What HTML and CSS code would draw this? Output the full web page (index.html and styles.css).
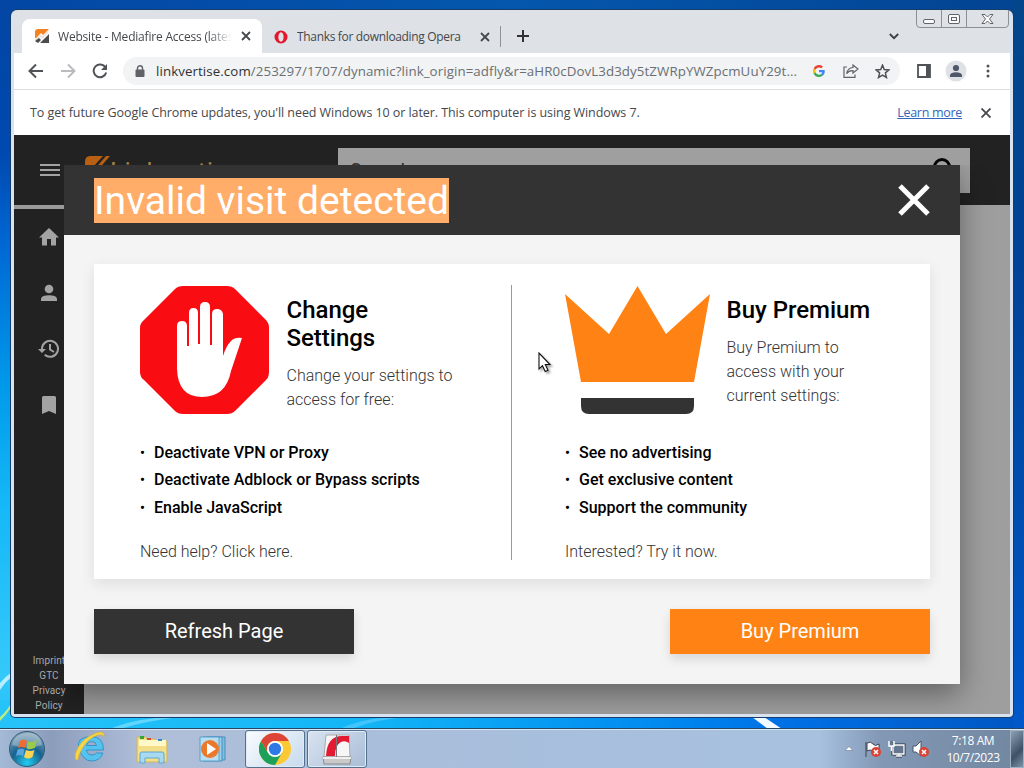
FILE: index.html
```html
<!DOCTYPE html>
<html lang="en">
<head>
  <meta charset="UTF-8">
  <title>Website - Mediafire Access</title>
  <link rel="stylesheet" href="styles.css">
</head>
<body>
<div class="desktop">
  <svg class="wallpaper" width="1024" height="768" viewBox="0 0 1024 768">
    <path d="M0 683Q6 676 12 672V677Q5 682 0 690Z" fill="#d9f7ff" opacity=".8"/>
    <path d="M0 717Q7 711 12 702V706Q7 714 0 721Z" fill="#b8ee81"/>
    <path d="M110 729Q130 720 165 717H180Q145 721 120 729Z" fill="#8ee6ff" opacity=".6"/>
    <path d="M340 729Q360 719 390 717H405Q370 721 352 729Z" fill="#6fd4ff" opacity=".5"/>
    <path d="M752 717H764L782 729H768Z" fill="#f2fbff"/>
  </svg>

  <div class="window">
    <div class="tabstrip">
      <div class="tab active">
        <svg width="16" height="16" viewBox="0 0 16 16"><path d="M4 1H15L9 7L7 5L3 10H1V4Q1 1 4 1Z" fill="#f58220"/><path d="M1 11L6 6L8 8L14 3V5L8 11L6 9L2 13Z" fill="#e9e5df"/><path d="M15 6V15H6L9 12ZM1 13L5 10L7 12L4 15Z" fill="#4b4b4e"/></svg>
        <span class="tab-title">Website - Mediafire Access (lates</span>
        <svg class="x" width="10" height="10" viewBox="0 0 10 10"><path d="M1 1L9 9M9 1L1 9"/></svg>
      </div>
      <div class="tab">
        <svg width="14" height="14" viewBox="0 0 14 14"><path fill-rule="evenodd" d="M7 .5A6.5 6.5 0 1 1 7 13.5A6.5 6.5 0 1 1 7 .5ZM7 2.3C3.5 2.3 3.5 11.7 7 11.7S10.500 2.300 7 2.300Z" fill="#e3182d"/></svg>
        <span class="tab-title">Thanks for downloading Opera</span>
        <svg class="x" width="10" height="10" viewBox="0 0 10 10"><path d="M1 1L9 9M9 1L1 9"/></svg>
      </div>
      <svg class="newtab" width="12" height="12" viewBox="0 0 12 12"><path d="M6 0V12M0 6H12" stroke="#303236" stroke-width="2"/></svg>
      <svg class="tabsearch" width="10" height="7" viewBox="0 0 10 7"><path d="M.8 1L5 5.200L9.200 1" fill="none" stroke="#3c4043" stroke-width="1.800"/></svg>
      <svg class="caption" width="94" height="18" viewBox="0 0 94 18" fill="none">
        <path d="M.5 0V14Q.5 17.500 4 17.500H89Q92.500 17.500 92.500 14V0M25.500 0V17M50.500 0V17" stroke="#8b8f96"/>
        <g stroke="#5f646d"><rect x="7.500" y="9.500" width="11" height="4" rx="1.500" fill="#fafafa"/><rect x="32.500" y="4.500" width="11" height="9" rx="1.500" fill="#fafafa"/><rect x="35.500" y="7.500" width="5" height="3"/><path d="M66 4.500H69L71.500 7L74 4.500H77L73.500 9L77 13.500H74L71.500 11L69 13.500H66L69.500 9Z" fill="#fafafa"/></g>
      </svg>
    </div>

    <div class="toolbar">
      <svg class="nav" width="16" height="16" viewBox="0 0 16 16"><path d="M15 8H2M8 1.500L1.500 8L8 14.500" stroke="#4f5357"/></svg>
      <svg class="nav" width="16" height="16" viewBox="0 0 16 16"><path d="M1 8H14M8 1.500L14.500 8L8 14.500" stroke="#b9bbbe"/></svg>
      <svg class="nav" width="16" height="16" viewBox="0 0 16 16"><path d="M13.500 4.500A6.400 6.400 0 1 0 14.200 9.600" stroke="#4f5357"/><path d="M15 1V7H9Z" fill="#4f5357"/></svg>
      <div class="omnibox">
        <svg width="10" height="13" viewBox="0 0 10 13"><rect x=".5" y="4.500" width="9" height="7.500" rx="1" fill="#5f6368"/><path d="M2.500 5V3.300a2.500 2.500 0 0 1 5 0V5" fill="none" stroke="#5f6368" stroke-width="1.400"/></svg>
        <span class="url"><b>linkvertise.com</b>/253297/1707/dynamic?link_origin=adfly&amp;r=aHR0cDovL3d3dy5tZWRpYWZpcmUuY29t...</span>
        <svg class="g" width="12" height="12" viewBox="0 0 48 48"><path fill="#ea4335" d="M24 9.500c3.500 0 6.700 1.200 9.200 3.600l6.900-6.900C35.900 2.400 30.500 0 24 0 14.600 0 6.500 5.400 2.600 13.200l8 6.200C12.400 13.700 17.700 9.500 24 9.500z"/><path fill="#4285f4" d="M47 24.600c0-1.600-.2-3.100-.4-4.600H24v9h12.900c-.6 3-2.300 5.500-4.800 7.200l7.700 6C44.400 38 47 31.800 47 24.600z"/><path fill="#fbbc05" d="M10.500 28.600a14.500 14.500 0 0 1 0-9.200l-8-6.200a24 24 0 0 0 0 21.600z"/><path fill="#34a853" d="M24 48c6.500 0 11.900-2.100 15.900-5.800l-7.700-6c-2.200 1.500-4.900 2.300-8.200 2.300-6.300 0-11.600-4.200-13.500-9.900l-8 6.200C6.500 42.600 14.600 48 24 48z"/></svg>
        <svg class="share" width="16" height="14" viewBox="0 0 16 14" fill="none" stroke="#5f6368" stroke-width="1.200"><path d="M4 3H1V13.400H12V10.500M10 1L15 5L10 9V6.600Q6 6.300 3.600 9.600Q4.500 4 10 3.500Z"/></svg>
        <svg width="15" height="15" viewBox="0 0 14 14"><path d="M7 1L8.600 5.100L13 5.500L9.700 8.300L10.700 12.600L7 10.300L3.300 12.600L4.300 8.300L1 5.500L5.400 5.100Z" fill="none" stroke="#4f5357" stroke-width="1.400"/></svg>
      </div>
      <svg class="panel" width="14" height="14" viewBox="0 0 14 14"><path d="M1 1H13V13H1Z" fill="none" stroke="#4f5357" stroke-width="1.800"/><path d="M9 1H13V13H9Z" fill="#4f5357"/></svg>
      <svg class="avatar" width="22" height="22" viewBox="0 0 22 22"><circle cx="11" cy="11" r="10.500" fill="#dee1e6"/><circle cx="11" cy="8" r="3.100" fill="#4f5868"/><path d="M5 17V15Q6 12.200 11 12.200T17 15V17Z" fill="#4f5868"/></svg>
      <svg width="4" height="14" viewBox="0 0 4 14" fill="#4f5357"><circle cx="2" cy="2" r="1.500"/><circle cx="2" cy="7" r="1.500"/><circle cx="2" cy="12" r="1.500"/></svg>
    </div>

    <div class="infobar">
      <span class="info">To get future Google Chrome updates, you'll need Windows 10 or later. This computer is using Windows 7.</span>
      <a class="learn">Learn more</a>
      <svg class="x" width="10" height="10" viewBox="0 0 10 10"><path d="M.5 .5L9.500 9.500M9.500 .5L.5 9.500"/></svg>
    </div>

    <div class="page">
      <div class="site-header">
        <svg width="20" height="14" viewBox="0 0 20 14"><path d="M0 2H20M0 7H20M0 12H20" stroke="#a3a3a3" stroke-width="2"/></svg>
        <svg class="logo" width="26" height="28" viewBox="0 0 26 28"><path d="M5 0H18L8 11H0V6Q0 0 5 0ZM21 0H25L12 15H8Z" fill="#b85f13"/></svg>
        <span class="brand">Linkvertise</span>
        <div class="search"><span>Search...</span><svg width="24" height="24" viewBox="0 0 24 24"><circle cx="9" cy="9" r="7.500" fill="none" stroke="#050505" stroke-width="3"/><path d="M14 14L22 22" stroke="#050505" stroke-width="3"/></svg></div>
      </div>
      <div class="sidebar">
        <svg width="20" height="18" viewBox="0 0 20 18"><path d="M10 0L20 9.500H17V17.500H12V11H8V17.500H3V9.500H0Z"/></svg>
        <svg width="18" height="18" viewBox="0 0 18 18"><circle cx="9" cy="5" r="4.300"/><path d="M1 17V14.500Q2 11.200 9 11.200T17 14.500V17Z"/></svg>
        <svg class="history" width="22" height="20" viewBox="0 0 22 20"><path d="M4 10A8 8 0 1 1 6.700 15.800M12 5V10.500L16 13" fill="none" stroke="#a3a3a3" stroke-width="2"/><path d="M0 10H8L4 14Z"/></svg>
        <svg width="14" height="18" viewBox="0 0 14 18"><path d="M0 1.500Q0 0 1.500 0H12.500Q14 0 14 1.500V18L7 15L0 18Z"/></svg>
        <div class="legal">Imprint<br>GTC<br>Privacy<br>Policy</div>
      </div>
    </div>
  </div>

  <div class="modal">
    <div class="modal-header">
      <h1>Invalid visit detected</h1>
      <svg width="32" height="32" viewBox="0 0 32 32"><path d="M2 2L30 30M30 2L2 30" stroke="#fff" stroke-width="5"/></svg>
    </div>
    <div class="card">
      <div class="option">
        <div class="top">
          <svg class="stop" width="129" height="128" viewBox="0 0 129 128">
            <path d="M43 0H87Q92 0 95 3L126 34Q129 37 129 42V86Q129 91 126 94L95 125Q92 128 87 128H43Q38 128 35 125L4 94Q0 91 0 86V42Q0 37 4 34L35 3Q38 0 43 0Z" fill="#f90d12"/>
            <path d="M37 83V40Q37 35 42 35T47 40V60H49V27Q49 22 53.500 22T58 27V58H60V21Q60 16 65 16T70 21V59H72V28Q72 23 77 23T83 28V70Q86 60 91 55Q95 51 102 52L91 85Q86 111 62 111T37 83Z" fill="#fff"/>
          </svg>
          <div class="text">
            <h2>Change Settings</h2>
            <p>Change your settings to access for free:</p>
          </div>
        </div>
        <ul>
          <li>Deactivate VPN or Proxy</li>
          <li>Deactivate Adblock or Bypass scripts</li>
          <li>Enable JavaScript</li>
        </ul>
        <p class="more">Need help? Click here.</p>
      </div>
      <div class="option premium">
        <div class="top">
          <svg class="crown" width="146" height="128" viewBox="0 0 146 128"><path d="M0 8L44 48L72.500 0L101 48L145 8L129 96H16Z" fill="#ff8215"/><path d="M16 112H129V120Q129 128 121 128H24Q16 128 16 120Z" fill="#333"/></svg>
          <div class="text">
            <h2>Buy Premium</h2>
            <p>Buy Premium to access with your current settings:</p>
          </div>
        </div>
        <ul>
          <li>See no advertising</li>
          <li>Get exclusive content</li>
          <li>Support the community</li>
        </ul>
        <p class="more">Interested? Try it now.</p>
      </div>
    </div>
    <div class="actions">
      <button>Refresh Page</button>
      <button class="buy">Buy Premium</button>
    </div>
  </div>

  <svg class="cursor" width="16" height="24" viewBox="0 0 16 24"><path d="M1 1V17L4.500 13.700L7.200 19.500L10 18.200L7.300 12.500H12Z" fill="#fff" stroke="#111" stroke-width="1.100"/></svg>

  <div class="taskbar">
    <svg class="start" width="38" height="38" viewBox="0 0 38 38">
      <defs>
        <radialGradient id="orb" cx=".5" cy=".9" r=".9"><stop offset="0" stop-color="#22cdf1"/><stop offset=".5" stop-color="#16628f"/><stop offset="1" stop-color="#8ba7bb"/></radialGradient>
      </defs>
      <circle cx="19" cy="19" r="17.500" fill="url(#orb)" stroke="#345b79"/>
      <path d="M4 15Q6 4 19 3T34 15Q19 20 4 15Z" fill="#fff" opacity=".3"/>
      <path d="M12 11Q15 8 19 11L17 18Q13 16 10 18Z" fill="#f16a30"/><path d="M20 11.500Q25 13 29 10L27 18Q22 20 18.500 18.500Z" fill="#9ac94b"/><path d="M9.500 19.500Q13 17.500 16.500 19.500L15 26Q11 24 8 26Z" fill="#5aa4df"/><path d="M18 20Q22 22 26.500 20L24.500 27Q20 30 16 27Z" fill="#fcd353"/>
    </svg>
    <svg class="ie" width="32" height="32" viewBox="0 0 32 32"><path fill-rule="evenodd" d="M29.500 19H12.500Q13 24 18 24Q21 24 22.500 22H29Q26 30 17.500 30T5 18T17.500 5.500Q29.500 6 29.500 19ZM12.500 14.500H22.500Q22 10.500 17.500 10.500T12.500 14.500Z" fill="#55c3ef" stroke="#258bc3" stroke-width=".8"/><path d="M30 6Q31 -1 22 2Q6 8 1.500 22Q0 30 4 29Q4 25 8 18Q14 7 24 4Q29 3 30 6Z" fill="#f6d548" stroke="#d9ab26" stroke-width=".6"/></svg>
    <svg class="folder" width="34" height="32" viewBox="0 0 34 32"><path d="M2 4H11L12 6H20L21 8H32V29H2Z" fill="#f3df87" stroke="#cdb55e"/><path d="M4 7H31V13H4Z" fill="#fff8c8"/><path d="M5 3H9V6H5Z" fill="#37a33c"/><path d="M12 5H16V7H12Z" fill="#d84c30"/><path d="M23 6H27V8H23Z" fill="#3689c4"/><path d="M5 30V21Q5 19 7 19H27Q29 19 29 21V30H24V25H10V30Z" fill="#a7d9f0" stroke="#61a8d0"/></svg>
    <svg class="wmp" width="28" height="28" viewBox="0 0 28 28"><path d="M8 2H26V25H8Z" fill="#80bde2" stroke="#488fbd"/><path d="M4 2H23V26H4Z" fill="#9bd0ed" stroke="#488fbd"/><path d="M1 2H20V26H1Z" fill="#b9def2" stroke="#5a9fc9"/><circle cx="11" cy="14" r="9" fill="#ec792b"/><path d="M8 8L17 14L8 20Z" fill="#fff"/></svg>
    <div class="task running">
      <svg width="32" height="32" viewBox="0 0 32 32"><circle cx="16" cy="16" r="16" fill="#fcc934"/><path d="M2.140 8L9.100 20L22.900 20L16 32A16 16 0 0 1 2.140 8Z" fill="#1da15a"/><path d="M2.140 8A16 16 0 0 1 29.860 8H16A8 8 0 0 0 9.100 20Z" fill="#dd4636"/><circle cx="16" cy="16" r="8" fill="#fff"/><circle cx="16" cy="16" r="6.200" fill="#2e79e6"/></svg>
    </div>
    <div class="task">
      <svg width="32" height="32" viewBox="0 0 32 32"><path d="M5 2H28L29 24H3Z" fill="#f6f6f6" stroke="#aaa"/><path d="M5 23Q6 3 21 3H28V10Q24 7 20 9Q14 12 14 23Z" fill="#e41932"/><path d="M15.500 2V24" stroke="#777"/><path d="M2 24H30L29 31H3Z" fill="#c9c9c9" stroke="#8b8b8b"/><path d="M2 24H30V26H2Z" fill="#eee"/></svg>
    </div>
    <div class="tray">
      <svg width="8" height="5" viewBox="0 0 8 5"><path d="M0 4.500L4 .5L8 4.500Z" fill="#fff" stroke="#55657a" stroke-width=".5"/></svg>
      <svg width="18" height="18" viewBox="0 0 18 18"><path d="M2 2V17M3 3Q7 1 9 4T15 4V11Q12 13 9 11T3 11Z" fill="#fff" stroke="#3d4551"/><circle cx="12" cy="12" r="5" fill="#d94234"/><path d="M10 10L14 14M14 10L10 14" stroke="#fff" stroke-width="1.600"/></svg>
      <svg width="18" height="18" viewBox="0 0 18 18"><path d="M5 5H16V14H5ZM8 16H14M11 14V16" fill="#65778f" stroke="#273342" stroke-width="3"/><path d="M5 5H16V14H5ZM8 16H14M11 14V16" fill="#65778f" stroke="#fff" stroke-width="1.300"/><path d="M1 1V6H6V1M3.500 6V11" fill="#65778f" stroke="#fff" stroke-width="1.500"/></svg>
      <svg width="18" height="18" viewBox="0 0 18 18"><path d="M1 6H4L9 1V16L4 12H1Z" fill="#fff" stroke="#495566"/><circle cx="12" cy="12" r="5" fill="#d94234"/><path d="M10 10L14 14M14 10L10 14" stroke="#fff" stroke-width="1.600"/></svg>
      <div class="clock">7:18 AM<br>10/7/2023</div>
    </div>
    <div class="show-desktop"></div>
  </div>
</div>
</body>
</html>
```

FILE: styles.css
```css
* { box-sizing: border-box; }
body { margin: 0; overflow: hidden; font-family: Roboto, sans-serif; }
svg { display: block; flex: none; }
h1, h2, p, ul { margin: 0; padding: 0; font-weight: 400; }

.desktop { position: relative; width: 1024px; height: 768px; overflow: hidden;
  background: linear-gradient(#0346a4, #0049b0 20%, #0068d4 32%, #0099ea 50%, #14b7f7 65%, #35c9fa 88%, #12b5f5 100%); }
.desktop::before { content: ""; position: absolute; left: 0; right: 0; top: 0; height: 768px;
  background:
    linear-gradient(90deg, #25c3f8, #13b6f6 35%, #0089f0 65%, #0071e6 76%, #0056c2) 0 700px / 100% 68px no-repeat,
    linear-gradient(90deg, #0346a4, #0457ad 50%, #034392) 0 0 / 100% 12px no-repeat; }
.desktop::after { content: ""; position: absolute; top: 0; right: 0; width: 11px; height: 728px;
  background: linear-gradient(#034689, #004295 35%, #004daf 70%, #0058ca); }
.wallpaper { position: absolute; left: 0; top: 0; }

/* browser window */
.window { position: absolute; left: 11px; top: 10px; width: 1002px; height: 707px; display: flex; flex-direction: column;
  background: #dee1e6; border: solid #d9e2ef; border-width: 0 3px 3px; border-radius: 6px 6px 4px 4px; box-shadow: 0 0 0 1px #153e6c; z-index: 1; }
.tabstrip { height: 43px; flex: none; display: flex; align-items: flex-end; font: 12px "Open Sans", sans-serif; color: #45484c; position: relative; }
.tab { height: 34px; display: flex; align-items: center; width: 239px; padding: 0 10px 0 12px; }
.tab.active { width: 240px; margin-left: 8px; padding-right: 11px; background: #fff; border-radius: 8px 8px 0 0; }
.tab-title { flex: 1; margin-left: 9px; overflow: hidden; white-space: nowrap; letter-spacing: -.33px; }
.active .tab-title { margin-left: 8px; margin-right: 6px; letter-spacing: -.2px; -webkit-mask-image: linear-gradient(90deg, #000 85%, transparent 98%); mask-image: linear-gradient(90deg, #000 85%, transparent 98%); }
.x path { stroke: #45484c; stroke-width: 1.8; }
.tab:nth-child(2) { border-right: 1px solid #8f9399; height: 21px; margin-bottom: 6px; }
.newtab { margin: 0 0 11px 16px; }
.tabsearch { margin: 0 111px 13px auto; }
.caption { position: absolute; right: 0; top: 0; }
.toolbar { height: 37px; flex: none; background: #fff; border-bottom: 1px solid #dcdde0; display: flex; align-items: center; padding: 0 20px 0 14px; }
.nav { margin-right: 16px; }
.nav path:first-child { fill: none; stroke-width: 2; }
.omnibox { width: 777px; height: 28px; margin-left: -1px; border-radius: 14px; background: #f1f3f4; display: flex; align-items: center; padding: 0 11px 0 12px; }
.url { width: 642px; margin-left: 11px; font: 13.3px "Open Sans", sans-serif; letter-spacing: .09px; color: #6b6f73; white-space: nowrap; }
.url b { font-weight: 400; color: #2f3134; }
.g { margin-left: 16px; }
.share { margin: 0 16px 0 18px; }
.panel { margin-left: 17px; }
.avatar { margin: 0 19px 0 14px; }
.infobar { height: 45px; flex: none; background: #fff; display: flex; align-items: center; padding: 0 19px 0 16px; font: 12.5px "Open Sans", sans-serif; letter-spacing: -.07px; color: #45484c; }
.learn { margin: 0 19px 0 auto; letter-spacing: -.3px; color: #3267bd; text-decoration: underline; }

/* page behind the dialog */
.page { height: 579px; flex: none; background: #9e9e9e; overflow: hidden; }
.site-header { height: 70px; background: #222; display: flex; align-items: center; padding-left: 26px; }
.logo { margin-left: 25px; }
.brand { color: #a68145; font-size: 26px; letter-spacing: .6px; margin: 4px 0 0 -1px; width: 198px; }
.search { width: 632px; height: 45px; background: #9f9f9f; display: flex; align-items: center; justify-content: space-between; padding: 0 13px 0 12px; margin-left: 30px; font-size: 20px; color: #333; flex: none; }
.search span { margin-top: 1px; }
.sidebar { width: 70px; height: 509px; background: #222; border-top: 4px solid #999; display: flex; flex-direction: column; align-items: center; gap: 38px; padding-top: 19px; }
.sidebar svg { fill: #a3a3a3; }
.sidebar .history { margin: -1px 0; }
.legal { margin-top: auto; margin-bottom: 1px; font-size: 10px; line-height: 15px; letter-spacing: .1px; text-align: center; color: #a8a8a8; }

/* dialog */
.modal { position: absolute; left: 64px; top: 165px; z-index: 2; width: 896px; height: 519px; background: #f4f4f4; box-shadow: 0 10px 28px rgba(0,0,0,.38); clip-path: inset(0 -50px -30px 0); }
.modal-header { height: 70px; padding: 0 30px; display: flex; align-items: center; justify-content: space-between; background: #333; }
h1 { font-size: 39px; line-height: 46px; height: 45px; color: #fff; background: #ffad69; white-space: nowrap; }
.card { display: flex; margin: 29px 30px 30px; height: 315px; padding: 21px 0 19px; background: #fff; box-shadow: 0 5px 14px rgba(0,0,0,.09); }
.option { width: 418px; padding-left: 46px; border-right: 1px solid #999; }
.premium { padding-left: 53px; border: 0; }
.top { display: flex; height: 149px; padding-top: 1px; }
.text { margin: 10px 0 0 17.5px; width: 170px; }
.premium .text { margin-left: 15.5px; width: 150px; }
h2 { font-size: 24px; line-height: 28px; font-weight: 500; letter-spacing: -.02px; }
.text p { margin-top: 12px; font-size: 16px; line-height: 24px; font-weight: 300; }
.premium .text p { width: 135px; }
.text p, .more { color: #333; }
ul { list-style: none; font-size: 16px; margin-top: 5px; }
li { display: flex; height: 27.4px; line-height: 27px; font-weight: 500; white-space: nowrap; }
li::before { content: "•"; width: 14px; font-size: 14px; line-height: 28px; }
.more { margin-top: 19px; line-height: 24px; font-size: 16px; font-weight: 300; }
.actions { display: flex; justify-content: space-between; padding: 0 30px; }
button { width: 260px; height: 45px; border: 0; padding: 0 0 2px; background: #333; color: #fff; font: 20px Roboto, sans-serif; box-shadow: 0 5px 10px rgba(0,0,0,.12); }
.buy { background: #ff8215; }
.cursor { position: absolute; left: 538px; top: 352px; z-index: 3; filter: drop-shadow(2px 2px 1px rgba(0,0,0,.35)); }

/* taskbar */
.taskbar { position: absolute; left: 0; bottom: 0; width: 1024px; height: 40px; border-top: 1px solid #244767; box-shadow: inset 0 1px #d9e9f7; display: flex; align-items: center; z-index: 1;
  background: linear-gradient(90deg, #a4bad6 0, #8c9dbc 5%, #b0bed8 14%, #a9bedb 35%, #a7c1df 80%, #8298b5 86%, #71869f 100%); }
.start { margin-left: 8px; }
.ie { margin-left: 28px; margin-bottom: 3px; }
.folder { margin-left: 29px; }
.wmp { margin-left: 30px; }
.task { width: 60px; height: 38px; margin-left: 2px; border: 1px solid #53708c; border-radius: 3px; box-shadow: inset 0 0 0 1px #e1ebf6; background: linear-gradient(135deg, #d9e3f0, #a9bdd7); display: flex; align-items: center; justify-content: center; }
.task.running { margin-left: 18px; background: linear-gradient(135deg, #fafcff, #c6d9ed); }
.tray { display: flex; align-items: center; gap: 6px; margin-left: auto; }
.tray svg:first-child { margin-right: 5px; }
.clock { width: 58px; margin-left: 8px; font: 12px/17px "Open Sans", sans-serif; letter-spacing: -.4px; text-align: center; color: #fff; white-space: nowrap; }
.show-desktop { width: 14px; height: 38px; margin-left: 8px; border: 1px solid #9eb0c2; background: linear-gradient(135deg, #8fa1b6, #3d5067 60%, #7e94aa); }
```
